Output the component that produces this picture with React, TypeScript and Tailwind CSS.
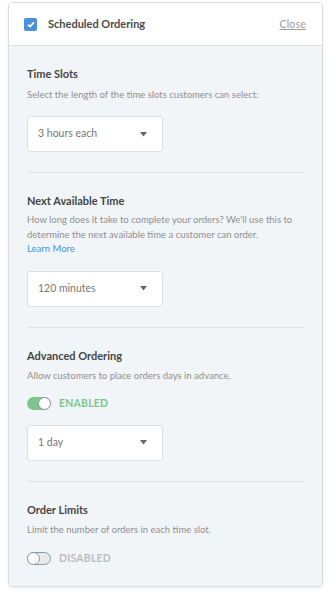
import React from "react";

const font = { fontFamily: "Lato, 'Open Sans', sans-serif" };

function Select({ value }: { value: string }) {
  return (
    <div className="mt-[14px] flex h-[36px] w-[136px] items-center justify-between rounded-[3px] border border-[#dcdfe2] bg-white pl-[10px] pr-[15px]">
      <span className="text-[10.5px] text-[#777]">{value}</span>
      <svg width="7" height="5" viewBox="0 0 7 5">
        <path d="M0 0 L7 0 L3.5 4.5 Z" fill="#666" />
      </svg>
    </div>
  );
}

function Toggle({ on }: { on: boolean }) {
  return (
    <div className={(on ? "mt-[14px]" : "mt-[15px]") + " flex h-[14px] items-center gap-[8px]"}>
      {on ? (
        <div className="relative h-[13px] w-[24px] rounded-full bg-[#7cc68b]">
          <div className="absolute right-0 top-0 h-[13px] w-[13px] rounded-full border border-[#8a9aa6] bg-white" />
        </div>
      ) : (
        <div className="relative h-[13px] w-[24px] rounded-full border border-[#8a9aa6] bg-[#e9eaeb]">
          <div className="absolute left-[-1px] top-[-1px] h-[13px] w-[13px] rounded-full border border-[#8a9aa6] bg-white" />
        </div>
      )}
      <span
        className={
          "text-[10.5px] font-bold tracking-[0.2px] " +
          (on ? "text-[#7cc68b]" : "text-[#bdbdbd]")
        }
      >
        {on ? "ENABLED" : "DISABLED"}
      </span>
    </div>
  );
}

function Section({
  title,
  children,
  last,
}: {
  title: string;
  children: React.ReactNode;
  last?: boolean;
}) {
  return (
    <div className={"pt-[21px] " + (last ? "pb-[20px]" : "pb-[20px] border-b border-[#dfe3e6]")}>
      <div className="text-[11px] font-bold leading-[14px] text-[#454545]">{title}</div>
      {children}
    </div>
  );
}

export default function App() {
  return (
    <div className="min-h-[597px] bg-white pt-[2px]" style={font}>
      <div className="mx-[8px] overflow-hidden rounded-[4px] border border-[#d8dcdf] shadow-[0_1px_2px_rgba(0,0,0,0.08)]">
        <div className="flex h-[43px] items-center justify-between border-b border-[#dcdfe2] bg-white pl-[15px] pr-[16px] pt-[1px]">
          <div className="flex items-center gap-[11px]">
            <div className="flex h-[13px] w-[13px] items-center justify-center rounded-[2px] bg-[#4a90d9]">
              <svg width="8" height="7" viewBox="0 0 8 7">
                <path d="M1 3.6 L3.1 5.6 L7 1.2" stroke="white" strokeWidth="1.7" fill="none" />
              </svg>
            </div>
            <span className="text-[11px] font-bold text-[#4a4a4a]">Scheduled Ordering</span>
          </div>
          <span className="text-[10.5px] tracking-[0.2px] text-[#9b9b9b] underline">Close</span>
        </div>
        <div className="bg-[#f2f5f7] pl-[18px] pr-[17px]">
          <Section title="Time Slots">
            <div className="mt-[6px] text-[9.5px] leading-[15px] text-[#8f8f8f]">
              Select the length of the time slots customers can select:
            </div>
            <Select value="3 hours each" />
          </Section>
          <Section title="Next Available Time">
            <div className="mt-[5px] text-[9.5px] leading-[14.6px] text-[#8f8f8f]">
              How long does it take to complete your orders? We'll use this to determine the next
              available time a customer can order.
              <div className="text-[#4a90e2]">Learn More</div>
            </div>
            <Select value="120 minutes" />
          </Section>
          <Section title="Advanced Ordering">
            <div className="mt-[5px] text-[9.5px] leading-[15px] text-[#8f8f8f]">
              Allow customers to place orders days in advance.
            </div>
            <Toggle on />
            <Select value="1 day" />
          </Section>
          <Section title="Order Limits" last>
            <div className="mt-[5px] text-[9.5px] leading-[15px] text-[#8f8f8f]">
              Limit the number of orders in each time slot.
            </div>
            <Toggle on={false} />
          </Section>
        </div>
      </div>
    </div>
  );
}
